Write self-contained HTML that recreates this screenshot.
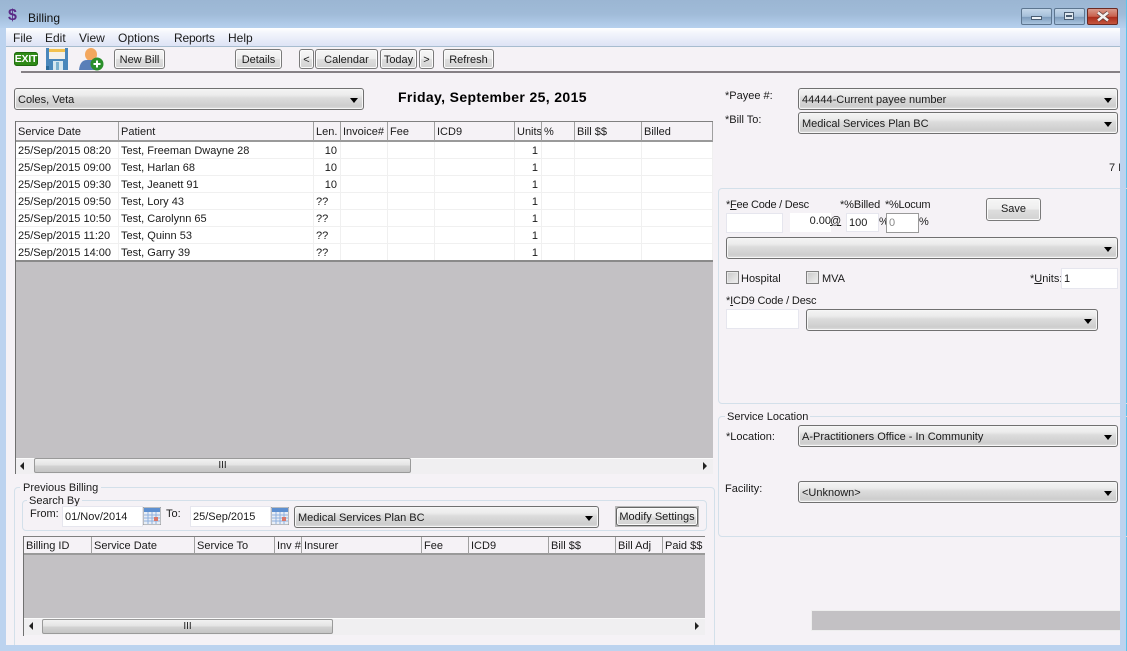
<!DOCTYPE html>
<html><head><meta charset="utf-8"><title>Billing</title>
<style>
html,body{margin:0;padding:0;width:1127px;height:651px;overflow:hidden;background:#bcd3ef}
body{position:relative;font:11px/14px "Liberation Sans",sans-serif;color:#1a1a1a}
div,span,table,svg{position:absolute}
td span,td div{position:static}
.t{white-space:nowrap;margin-top:1px}
.btn{box-sizing:border-box;border:1px solid #7a7a7a;border-radius:3px;padding-top:1px;background:linear-gradient(#f6f6f6 0,#eeeeee 48%,#dedede 52%,#d2d2d2 100%);text-align:center;white-space:nowrap;box-shadow:inset 0 0 0 1px #fbfbfb}
.cb{box-sizing:border-box;border:1px solid #707070;border-radius:3px;padding-top:1px;background:linear-gradient(#f4f4f4 0,#ececec 30%,#dcdcdc 45%,#cdcdcd 85%,#dedede 100%);white-space:nowrap;height:22px;line-height:20px;padding-left:3px;box-shadow:inset 0 0 0 1px #f6f6f6}
.cb:after{content:"";position:absolute;right:5px;top:9px;border:4px solid transparent;border-top:5px solid #000;border-bottom:0;border-left-width:4px;border-right-width:4px}
.in{box-sizing:border-box;background:#fff;border:1px solid #e6e6ee;white-space:nowrap}
.grp{box-sizing:border-box;border:1px solid #d3e0ea;border-radius:4px}
.ck{box-sizing:border-box;width:13px;height:13px;border:1px solid #808080;background:linear-gradient(135deg,#c8c8c8,#f0f0f0);box-shadow:inset 0 0 0 1px #e8e8e8}
table{border-collapse:separate;border-spacing:0;table-layout:fixed}
th{box-sizing:border-box;font-weight:normal;text-align:left;padding:1px 0 0 2px;white-space:nowrap;overflow:hidden;background:#f5f2f6;border-right:1px solid #a0a0a0;border-bottom:2px solid #9a9a9a}
td{box-sizing:border-box;height:17px;padding:1px 0 0 2px;white-space:nowrap;overflow:hidden;background:#fff;border-right:1px solid #f0f0f0;border-bottom:1px solid #f0f0f0}
.r{text-align:right;padding-right:3px}
.thumb{box-sizing:border-box;border:1px solid #9a9a9a;border-radius:2px;background:linear-gradient(#f2f2f2,#e4e4e4 45%,#d2d2d2 55%,#c4c4c4);text-align:center;font-size:10px;line-height:13px;color:#222}
.ta{width:0;height:0;border:4px solid transparent}
</style></head><body>

<!-- title bar -->
<div style="left:0;top:0;width:1127px;height:28px;background:linear-gradient(#9bb6d3,#a0bbd8 50%,#b6d0ee)"></div>
<div class="t" style="left:8px;top:6px;font:bold 16px/18px 'Liberation Sans',sans-serif;color:#5a2a86">$</div>
<div class="t" style="left:28px;top:10px;font-size:12px;color:#111">Billing</div>
<div style="left:1021px;top:8px;width:31px;height:17px;box-sizing:border-box;border:1px solid #5d7690;border-radius:2px;background:linear-gradient(#c5d7e9,#a5bfd9 50%,#7f9dbd 55%,#a9c4de)"></div>
<div style="left:1031px;top:16px;width:9px;height:2px;background:#eef3f8;border:1px solid #4a5d72"></div>
<div style="left:1054px;top:8px;width:31px;height:17px;box-sizing:border-box;border:1px solid #5d7690;border-radius:2px;background:linear-gradient(#c5d7e9,#a5bfd9 50%,#7f9dbd 55%,#a9c4de)"></div>
<div style="left:1064px;top:12px;width:10px;height:8px;box-sizing:border-box;background:#dfe8f0;border:1px solid #4a5d72"></div>
<div style="left:1066px;top:15px;width:6px;height:2px;background:#4a5d72"></div>
<div style="left:1087px;top:8px;width:31px;height:17px;box-sizing:border-box;border:1px solid #6b2a22;border-radius:2px;background:linear-gradient(#d89a8c,#c9604d 50%,#ac2d1c 55%,#c4563f)"></div>
<svg style="left:1096px;top:11px" width="14" height="11"><path d="M2 1.5 L12 9.5 M12 1.5 L2 9.5" stroke="#5a3a38" stroke-width="4"/><path d="M2 1.5 L12 9.5 M12 1.5 L2 9.5" stroke="#f4efee" stroke-width="2.6"/></svg>

<!-- client -->
<div style="left:6px;top:28px;width:1114px;height:617px;background:#f5f2f6"></div>
<div style="left:1126px;top:0;width:1px;height:651px;background:#5cc4ea"></div>
<div style="left:6px;top:28px;width:1114px;height:18px;background:linear-gradient(#fff 0,#f4f6fc 25%,#dde3f5 100%);border-bottom:1px solid #a7bccf"></div>
<div class="t" style="left:13px;top:30px;font-size:12px">File</div>
<div class="t" style="left:45px;top:30px;font-size:12px">Edit</div>
<div class="t" style="left:79px;top:30px;font-size:12px">View</div>
<div class="t" style="left:118px;top:30px;font-size:12px">Options</div>
<div class="t" style="left:174px;top:30px;font-size:12px;letter-spacing:-.2px">Reports</div>
<div class="t" style="left:228px;top:30px;font-size:12px">Help</div>

<!-- toolbar -->
<div style="left:14px;top:52px;width:24px;height:14px;background:#2e8a16;border-radius:3px;box-shadow:inset 0 0 0 1px #1e6a0e;color:#fff;font:bold 10.5px/15px 'Liberation Sans',sans-serif;text-align:center;letter-spacing:-.2px">EXIT</div>
<svg style="left:46px;top:48px" width="22" height="22"><rect width="22" height="22" fill="#4a87bb"/><rect x="3" y="0" width="16" height="11" fill="#f4f1ea"/><rect x="3" y="1" width="16" height="3" fill="#f2c14e"/><rect x="7" y="13" width="10" height="9" fill="#d8e8f0"/><rect x="10" y="14" width="3" height="8" fill="#7fb2cf"/><rect x="0" y="18" width="3" height="4" fill="#2a6a9a"/></svg>
<svg style="left:79px;top:48px" width="25" height="23"><ellipse cx="12" cy="6.5" rx="6" ry="6.5" fill="#f3a75e"/><path d="M0 22 Q1 12 8 12 L16 12 Q20 14 20 22Z" fill="#5a7fb8"/><circle cx="18" cy="16" r="6.5" fill="#2b8f2b"/><path d="M18 12.5V19.5M14.5 16H21.5" stroke="#fff" stroke-width="2"/></svg>
<div class="btn" style="left:114px;top:49px;width:51px;height:20px;line-height:18px">New Bill</div>
<div class="btn" style="left:235px;top:49px;width:47px;height:20px;line-height:18px">Details</div>
<div class="btn" style="left:299px;top:49px;width:15px;height:20px;line-height:18px">&lt;</div>
<div class="btn" style="left:315px;top:49px;width:63px;height:20px;line-height:18px">Calendar</div>
<div class="btn" style="left:380px;top:49px;width:37px;height:20px;line-height:18px">Today</div>
<div class="btn" style="left:419px;top:49px;width:15px;height:20px;line-height:18px">&gt;</div>
<div class="btn" style="left:443px;top:49px;width:51px;height:20px;line-height:18px">Refresh</div>
<div style="left:21px;top:71px;width:1099px;height:2px;background:#858085"></div>

<!-- patient + date -->
<div class="cb" style="left:14px;top:88px;width:350px">Coles, Veta</div>
<div class="t" style="left:398px;top:88px;font:bold 14px/16px 'Liberation Sans',sans-serif;color:#000;letter-spacing:.36px">Friday, September 25, 2015</div>

<!-- main table -->
<div style="left:15px;top:121px;width:698px;height:353px;background:#c3c1c4"></div>
<div style="left:15px;top:121px;width:698px;height:1px;background:#808080"></div>
<div style="left:15px;top:121px;width:1px;height:353px;background:#707070"></div>
<table style="left:16px;top:122px;width:697px">
<colgroup><col style="width:103px"><col style="width:195px"><col style="width:27px"><col style="width:47px"><col style="width:47px"><col style="width:80px"><col style="width:27px"><col style="width:33px"><col style="width:67px"><col style="width:71px"></colgroup>
<tr style="height:20px"><th>Service Date</th><th>Patient</th><th>Len.</th><th>Invoice#</th><th>Fee</th><th>ICD9</th><th>Units</th><th>%</th><th>Bill $$</th><th>Billed</th></tr>
<tr><td>25/Sep/2015 08:20</td><td>Test, Freeman Dwayne 28</td><td class="r">10</td><td></td><td></td><td></td><td class="r">1</td><td></td><td></td><td></td></tr>
<tr><td>25/Sep/2015 09:00</td><td>Test, Harlan 68</td><td class="r">10</td><td></td><td></td><td></td><td class="r">1</td><td></td><td></td><td></td></tr>
<tr><td>25/Sep/2015 09:30</td><td>Test, Jeanett 91</td><td class="r">10</td><td></td><td></td><td></td><td class="r">1</td><td></td><td></td><td></td></tr>
<tr><td>25/Sep/2015 09:50</td><td>Test, Lory 43</td><td>??</td><td></td><td></td><td></td><td class="r">1</td><td></td><td></td><td></td></tr>
<tr><td>25/Sep/2015 10:50</td><td>Test, Carolynn 65</td><td>??</td><td></td><td></td><td></td><td class="r">1</td><td></td><td></td><td></td></tr>
<tr><td>25/Sep/2015 11:20</td><td>Test, Quinn 53</td><td>??</td><td></td><td></td><td></td><td class="r">1</td><td></td><td></td><td></td></tr>
<tr><td>25/Sep/2015 14:00</td><td>Test, Garry 39</td><td>??</td><td></td><td></td><td></td><td class="r">1</td><td></td><td></td><td></td></tr>
</table>
<div style="left:16px;top:260px;width:697px;height:2px;background:#8a8a8a"></div>
<!-- scrollbar 1 -->
<div style="left:16px;top:458px;width:697px;height:16px;background:#f0eff1;border-top:1px solid #fafafa;box-sizing:border-box"></div>
<div class="ta" style="left:20px;top:462px;border-right:4px solid #222;border-left:0"></div>
<div class="ta" style="left:703px;top:462px;border-left:4px solid #222;border-right:0"></div>
<div class="thumb" style="left:34px;top:458px;width:377px;height:15px">III</div>

<!-- previous billing -->
<div class="grp" style="left:14px;top:487px;width:701px;height:170px"></div>
<div class="t" style="left:20px;top:480px;background:#f5f2f6;padding:0 3px">Previous Billing</div>
<div class="grp" style="left:22px;top:500px;width:685px;height:31px"></div>
<div class="t" style="left:27px;top:493px;background:#f5f2f6;padding:0 2px">Search By</div>
<div class="t" style="left:30px;top:506px">From:</div>
<div class="in" style="left:62px;top:506px;width:81px;height:21px;line-height:20px;padding-left:2px">01/Nov/2014</div>
<svg style="left:143px;top:507px" width="18" height="18"><rect width="18" height="18" fill="#e8eef6" stroke="#8a8a8a"/><rect x="1" y="1" width="16" height="4" fill="#5d8fd0"/><path d="M1 8H17M1 11H17M1 14H17M5 5V17M9 5V17M13 5V17" stroke="#8fb0de"/><rect x="11" y="10" width="4" height="4" fill="#d9776a"/></svg>
<div class="t" style="left:166px;top:506px">To:</div>
<div class="in" style="left:190px;top:506px;width:81px;height:21px;line-height:20px;padding-left:2px">25/Sep/2015</div>
<svg style="left:271px;top:507px" width="18" height="18"><rect width="18" height="18" fill="#e8eef6" stroke="#8a8a8a"/><rect x="1" y="1" width="16" height="4" fill="#5d8fd0"/><path d="M1 8H17M1 11H17M1 14H17M5 5V17M9 5V17M13 5V17" stroke="#8fb0de"/><rect x="11" y="10" width="4" height="4" fill="#d9776a"/></svg>
<div class="cb" style="left:294px;top:506px;width:305px">Medical Services Plan BC</div>
<div style="left:615px;top:506px;width:84px;height:21px;background:#b8b8b8;box-sizing:border-box;padding:1px"></div>
<div class="btn" style="left:616px;top:507px;width:82px;height:19px;line-height:17px;border-color:#666">Modify Settings</div>

<!-- table 2 -->
<div style="left:23px;top:536px;width:682px;height:82px;background:#c3c1c4"></div>
<div style="left:23px;top:536px;width:682px;height:1px;background:#808080"></div>
<div style="left:23px;top:536px;width:1px;height:100px;background:#707070"></div>
<table style="left:24px;top:537px;width:681px">
<colgroup><col style="width:68px"><col style="width:103px"><col style="width:80px"><col style="width:27px"><col style="width:120px"><col style="width:47px"><col style="width:80px"><col style="width:67px"><col style="width:47px"><col style="width:42px"></colgroup>
<tr style="height:18px"><th>Billing ID</th><th>Service Date</th><th>Service To</th><th>Inv #</th><th>Insurer</th><th>Fee</th><th>ICD9</th><th>Bill $$</th><th>Bill Adj</th><th style="border-right:0">Paid $$</th></tr>
</table>
<div style="left:24px;top:618px;width:681px;height:17px;background:#f0eff1;border-top:1px solid #fafafa;box-sizing:border-box"></div>
<div class="ta" style="left:29px;top:622px;border-right:4px solid #222;border-left:0"></div>
<div class="ta" style="left:695px;top:622px;border-left:4px solid #222;border-right:0"></div>
<div class="thumb" style="left:42px;top:619px;width:291px;height:15px">III</div>

<!-- right panel top -->
<div class="t" style="left:725px;top:88px">*Payee #:</div>
<div class="t" style="left:725px;top:112px">*Bill To:</div>
<div class="cb" style="left:798px;top:88px;width:320px">44444-Current payee number</div>
<div class="cb" style="left:798px;top:112px;width:320px">Medical Services Plan BC</div>
<div class="t" style="left:1109px;top:160px;width:11px;overflow:hidden">7 I</div>

<!-- fee group -->
<div class="grp" style="left:718px;top:188px;width:420px;height:216px"></div>
<div class="t" style="left:726px;top:197px;letter-spacing:-.25px">*<u>F</u>ee Code / Desc</div>
<div class="t" style="left:840px;top:197px;letter-spacing:-.1px">*%Billed</div>
<div class="t" style="left:885px;top:197px;letter-spacing:-.25px">*%Locum</div>
<div class="in" style="left:726px;top:213px;width:57px;height:20px"></div>
<div style="left:790px;top:213px;width:41px;height:19px;background:#fff;text-align:right;line-height:16px">0.00</div>
<div class="t" style="left:830px;top:213px"><u>@</u></div>
<div class="in" style="left:846px;top:213px;width:33px;height:19px;line-height:19px;padding-left:2px">100</div>
<div class="t" style="left:879px;top:214px">%</div>
<div class="in" style="left:886px;top:213px;width:33px;height:20px;line-height:19px;padding-left:2px;border-color:#9a9a9a;color:#888">0</div>
<div class="t" style="left:919px;top:214px">%</div>
<div class="btn" style="left:986px;top:198px;width:55px;height:23px;line-height:18px">Save</div>
<div class="cb" style="left:726px;top:237px;width:392px"></div>
<div class="ck" style="left:726px;top:271px"></div>
<div class="t" style="left:741px;top:271px">Hospital</div>
<div class="ck" style="left:806px;top:271px"></div>
<div class="t" style="left:822px;top:271px">MVA</div>
<div class="t" style="left:1030px;top:271px">*<u>U</u>nits:</div>
<div class="in" style="left:1061px;top:268px;width:57px;height:21px;line-height:20px;padding-left:2px">1</div>
<div class="t" style="left:726px;top:293px;letter-spacing:-.15px">*<u>I</u>CD9 Code / Desc</div>
<div class="in" style="left:726px;top:309px;width:73px;height:20px"></div>
<div class="cb" style="left:806px;top:309px;width:292px"></div>

<!-- service location -->
<div class="grp" style="left:718px;top:416px;width:420px;height:121px"></div>
<div class="t" style="left:725px;top:409px;background:#f5f2f6;padding:0 2px">Service Location</div>
<div class="t" style="left:726px;top:429px">*Location:</div>
<div class="cb" style="left:798px;top:425px;width:320px">A-Practitioners Office - In Community</div>
<div class="t" style="left:725px;top:481px">Facility:</div>
<div class="cb" style="left:798px;top:481px;width:320px">&lt;Unknown&gt;</div>

<!-- status -->
<div style="left:811px;top:610px;width:309px;height:21px;box-sizing:border-box;background:#c3c1c4;border:1px solid #eeeeee;border-right:0"></div>

<!-- window border covers -->
<div style="left:1120px;top:28px;width:6px;height:623px;background:#bcd3ef"></div>
<div style="left:0;top:645px;width:1126px;height:6px;background:#bcd3ef"></div>
<div style="left:0;top:28px;width:6px;height:623px;background:#bcd3ef"></div>
</body></html>
